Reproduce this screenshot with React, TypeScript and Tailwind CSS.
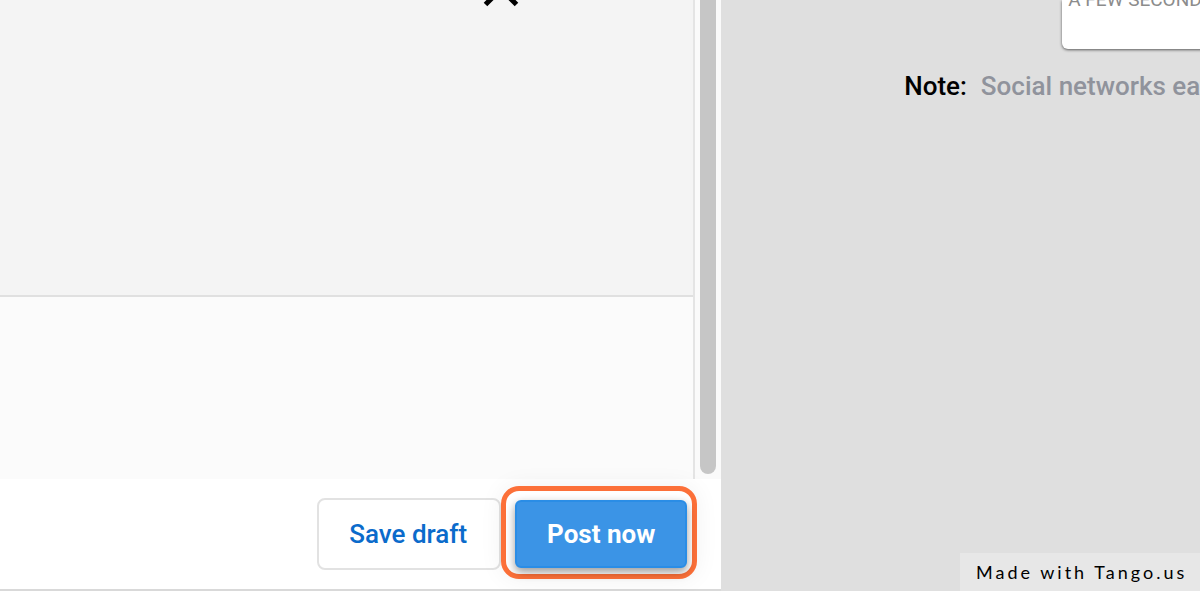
function Composer() {
  return (
    <section className="flex w-[60.1%] flex-col border-b-2 border-[#d9d9d9] bg-white">
      <div className="flex min-h-0 flex-1">
        <div className="flex min-w-0 flex-1 flex-col border-r-2 border-[#e4e4e4]">
          <div className="flex h-[297px] justify-end overflow-hidden border-b-2 border-[#e0e0e0] bg-[#f4f4f4] pr-[174px]">
            <button type="button" aria-label="Close" className="-mt-7 h-9 w-9 text-black">
              <svg viewBox="0 0 36 36" className="h-9 w-9" fill="none" stroke="currentColor" strokeWidth="5">
                <path d="M2.5 1.5 L33.5 32.5 M33.5 1.5 L2.5 32.5" />
              </svg>
            </button>
          </div>
          <div className="flex-1 bg-[#fbfbfb]" />
        </div>
        <div className="flex w-[26px] bg-[#fafafa] pb-[5px] pl-[5px]">
          <div className="w-4 rounded-b-full bg-[#c6c6c6]" />
        </div>
      </div>
      <footer className="flex h-[110px] items-center justify-end pr-6">
        <button
          type="button"
          className="h-[72px] w-[184px] rounded-lg border-2 border-[#e2e2e2] bg-white pr-[2px] text-[26px] font-medium text-[#0b6bcb]"
        >
          Save draft
        </button>
        <div className="mb-1 rounded-[18px] border-[5px] border-[#fc7039] bg-white pt-[9px] pr-[5px] pb-[6px] pl-[9px] shadow-[0_0_24px_rgba(0,0,0,0.06)]">
          <button
            type="button"
            className="block h-[68px] w-[172px] rounded-md border-2 border-[#2a8de6] bg-[#3b94e6] pt-[2px] text-[26px] font-bold text-white shadow-[0_4px_10px_rgba(0,0,0,0.4)]"
          >
            Post now
          </button>
        </div>
      </footer>
    </section>
  );
}

function Preview() {
  return (
    <section className="flex min-w-0 flex-1 flex-col overflow-hidden">
      <article className="ml-[341px] h-[49px] w-96 overflow-hidden rounded-b-md bg-white pl-[6px] text-[19px] whitespace-nowrap text-[#8c8c8c] shadow-[0_1px_3px_rgba(0,0,0,0.6)]">
        <p className="-mt-3 leading-6">A FEW SECONDS AGO</p>
      </article>
      <p className="mt-[21px] ml-[183px] flex gap-[14px] text-[26px] leading-8 font-medium whitespace-nowrap text-[#90939c]">
        <strong className="font-medium text-black">Note:</strong>
        <span>Social networks each</span>
      </p>
      <a
        href="https://tango.us"
        className="mt-auto flex h-[38px] w-60 items-center self-end bg-[#e7e7e7] pl-4 font-['Lato',sans-serif] text-lg tracking-[3px] whitespace-nowrap text-black"
      >
        Made with Tango.us
      </a>
    </section>
  );
}

export default function App() {
  return (
    <main className="flex h-screen overflow-hidden bg-[#dfdfdf] font-['Roboto',sans-serif]">
      <Composer />
      <Preview />
    </main>
  );
}
